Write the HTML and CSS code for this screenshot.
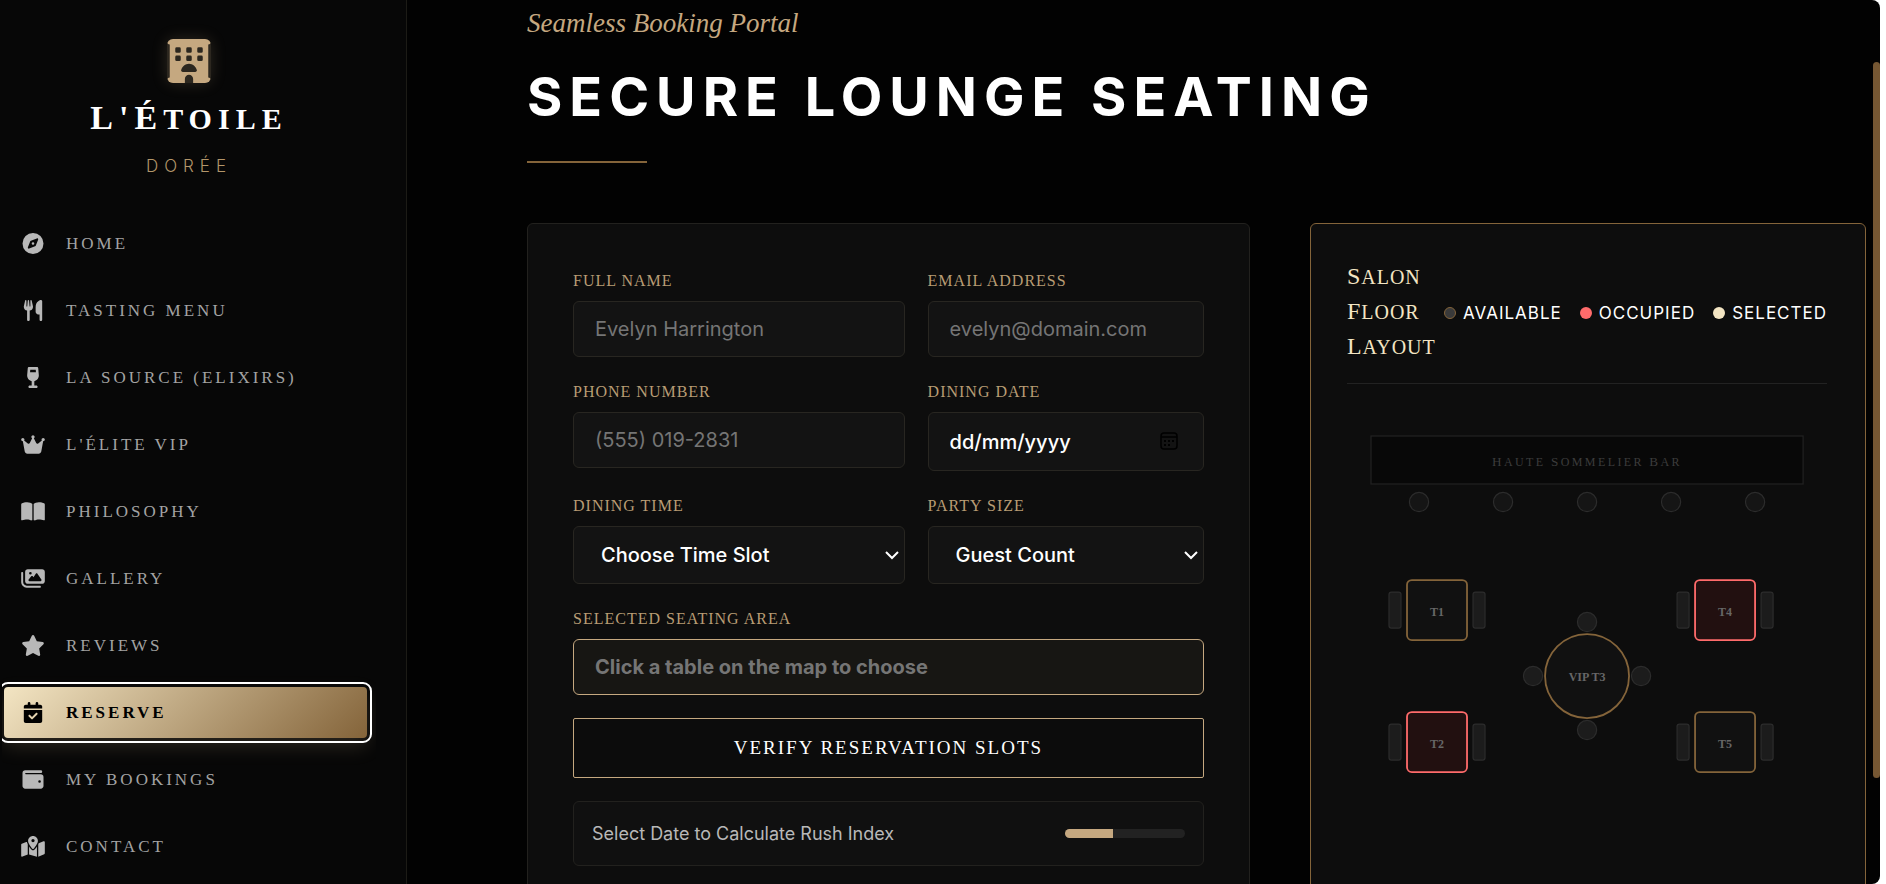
FILE: index.html
```html
<!DOCTYPE html>
<html lang="en">
<head>
    <meta charset="UTF-8">
    <meta name="viewport" content="width=device-width, initial-scale=1.0">
    <title>L'Étoile Dorée - Reserve</title>
    <link rel="stylesheet" href="styles.css">
</head>
<body>
    <div class="app">
        <!-- Sidebar -->
        <aside class="sidebar">
            <div class="brand">
                <svg class="brand-icon" viewBox="0 0 512 512" aria-hidden="true">
                    <path fill-rule="evenodd" d="M32 0H480c17.700 0 32 14.300 32 32s-14.300 32-32 32V448c17.700 0 32 14.300 32 32s-14.300 32-32 32H304V464c0-26.500-21.500-48-48-48s-48 21.500-48 48v48H32c-17.700 0-32-14.300-32-32s14.300-32 32-32V64C14.300 64 0 49.700 0 32S14.300 0 32 0zM112 96h32q16 0 16 16v32q0 16-16 16h-32q-16 0-16-16v-32q0-16 16-16zM240 96h32q16 0 16 16v32q0 16-16 16h-32q-16 0-16-16v-32q0-16 16-16zM368 96h32q16 0 16 16v32q0 16-16 16h-32q-16 0-16-16v-32q0-16 16-16zM112 192h32q16 0 16 16v32q0 16-16 16h-32q-16 0-16-16v-32q0-16 16-16zM240 192h32q16 0 16 16v32q0 16-16 16h-32q-16 0-16-16v-32q0-16 16-16zM368 192h32q16 0 16 16v32q0 16-16 16h-32q-16 0-16-16v-32q0-16 16-16zM184 384c-13 0-23-9-19-22 12-42 48-74 91-74s79 32 91 74c4 13-6 22-19 22z"/>
                </svg>
                <div class="brand-name"><span>L'</span><span>Étoile</span></div>
                <div class="brand-sub">DORÉE</div>
            </div>
            <nav class="nav">
                <a href="#home" class="nav-link">
                    <svg viewBox="0 0 512 512" aria-hidden="true"><path d="M256 512A256 256 0 1 0 256 0a256 256 0 1 0 0 512zm50.700-186.900L162.400 380.600c-19.400 7.500-38.500-11.600-31-31l55.500-144.300c3.300-8.500 9.900-15.100 18.400-18.400l144.300-55.500c19.400-7.500 38.500 11.600 31 31L325.100 306.700c-3.200 8.500-9.900 15.100-18.400 18.400zM288 256a32 32 0 1 0 -64 0 32 32 0 1 0 64 0z"/></svg>
                    <span>HOME</span>
                </a>
                <a href="#menu" class="nav-link">
                    <svg viewBox="0 0 448 512" aria-hidden="true"><path d="M416 0C400 0 288 32 288 176V288c0 35.300 28.700 64 64 64h32V480c0 17.700 14.300 32 32 32s32-14.300 32-32V352 240 32c0-17.700-14.300-32-32-32zM64 16C64 7.800 57.900 1 49.700 .1S34.200 4.600 32.400 12.500L2.100 148.800C.7 155.100 0 161.500 0 167.900c0 45.900 35.100 83.600 80 87.700V480c0 17.700 14.300 32 32 32s32-14.300 32-32V255.600c44.900-4.100 80-41.800 80-87.700c0-6.400-.7-12.800-2.100-19.100L191.600 12.500c-1.800-8-9.300-13.300-17.400-12.400S160 7.800 160 16V150.200c0 5.400-4.400 9.800-9.800 9.800c-5.100 0-9.300-3.900-9.800-9L127.900 14.600C127.200 6.300 120.300 0 112 0s-15.200 6.300-15.900 14.600L83.700 151c-.5 5.100-4.700 9-9.800 9c-5.400 0-9.800-4.400-9.800-9.800V16z"/></svg>
                    <span>TASTING MENU</span>
                </a>
                <a href="#elixirs" class="nav-link">
                    <svg viewBox="0 0 320 512" aria-hidden="true"><path d="M32.100 29.300C33.500 12.800 47.400 0 64 0H256c16.600 0 30.500 12.800 31.900 29.300l14 168.400c6 72-42.500 135.200-109.900 150.600V448h48c17.700 0 32 14.300 32 32s-14.300 32-32 32H160 80c-17.700 0-32-14.300-32-32s14.300-32 32-32h48V348.400C60.600 333 12.100 269.800 18.100 197.800l14-168.400zm56 98.700H231.900l-5.300-64H93.400l-5.300 64z"/></svg>
                    <span>LA SOURCE (ELIXIRS)</span>
                </a>
                <a href="#vip" class="nav-link">
                    <svg viewBox="0 0 576 512" aria-hidden="true"><path d="M309 106c11.400-7 19-19.700 19-34c0-22.100-17.900-40-40-40s-40 17.900-40 40c0 14.400 7.600 27 19 34L209.700 220.600c-9.100 18.200-32.700 23.400-48.600 10.700L72 160c5-6.700 8-15 8-24c0-22.100-17.900-40-40-40S0 113.900 0 136s17.900 40 40 40c.2 0 .5 0 .7 0L86.400 427.400c5.500 30.400 32 52.600 63 52.600H426.600c30.900 0 57.400-22.100 63-52.600L535.300 176c.2 0 .5 0 .7 0c22.100 0 40-17.900 40-40s-17.900-40-40-40s-40 17.900-40 40c0 9 3 17.300 8 24l-89.100 71.300c-15.900 12.700-39.500 7.500-48.600-10.700L309 106z"/></svg>
                    <span>L'ÉLITE VIP</span>
                </a>
                <a href="#philosophy" class="nav-link">
                    <svg viewBox="0 0 576 512" aria-hidden="true"><path d="M249.600 471.500c10.800 3.800 22.400-4.100 22.400-15.500V78.600c0-4.200-1.600-8.400-5-11C247.400 52 202.400 32 144 32C93.500 32 46.300 45.300 18.100 56.100C6.800 60.500 0 71.700 0 83.800V454.100c0 11.900 12.800 20.200 24.100 16.500C55.600 460.100 105.500 448 144 448c33.900 0 79 14 105.600 23.500zm76.800 0C353 462 398.100 448 432 448c38.500 0 88.400 12.100 119.900 22.600c11.300 3.800 24.100-4.600 24.100-16.500V83.800c0-12.100-6.800-23.300-18.100-27.600C529.700 45.300 482.500 32 432 32c-58.400 0-103.400 20-123 35.600c-3.300 2.600-5 6.800-5 11V456c0 11.400 11.700 19.300 22.400 15.500z"/></svg>
                    <span>PHILOSOPHY</span>
                </a>
                <a href="#gallery" class="nav-link">
                    <svg viewBox="0 0 576 512" aria-hidden="true"><path d="M160 32c-35.300 0-64 28.700-64 64V320c0 35.300 28.700 64 64 64H512c35.300 0 64-28.700 64-64V96c0-35.300-28.700-64-64-64H160zM396 138.700l96 144c4.900 7.400 5.400 16.800 1.200 24.600S480.900 320 472 320H328 280 200c-9.200 0-17.600-5.300-21.600-13.600s-2.900-18.200 2.900-25.400l64-80c4.600-5.700 11.400-9 18.700-9s14.200 3.300 18.700 9l17.300 21.600 56-84C360.500 132 368 128 376 128s15.500 4 20 10.700zM192 128a32 32 0 1 1 64 0 32 32 0 1 1 -64 0zM48 120c0-13.300-10.700-24-24-24S0 106.700 0 120V344c0 75.100 60.900 136 136 136H456c13.300 0 24-10.700 24-24s-10.700-24-24-24H136c-48.600 0-88-39.400-88-88V120z"/></svg>
                    <span>GALLERY</span>
                </a>
                <a href="#reviews" class="nav-link">
                    <svg viewBox="0 0 576 512" aria-hidden="true"><path d="M316.900 18C311.600 7 300.400 0 288.100 0s-23.400 7-28.800 18L195 150.300 51.400 171.500c-12 1.800-22 10.200-25.700 21.700s-.7 24.200 7.900 32.700L137.800 329 113.200 474.700c-2 12 3 24.200 12.900 31.300s23 8 33.800 2.300l128.300-68.500 128.300 68.500c10.800 5.700 23.900 4.900 33.800-2.300s14.900-19.300 12.900-31.300L438.500 329 542.700 225.900c8.600-8.500 11.700-21.200 7.900-32.700s-13.700-19.900-25.700-21.700L381.200 150.300 316.900 18z"/></svg>
                    <span>REVIEWS</span>
                </a>
                <a href="#reserve" class="nav-link active">
                    <svg viewBox="0 0 448 512" aria-hidden="true"><path d="M128 0c17.700 0 32 14.300 32 32V64H288V32c0-17.700 14.300-32 32-32s32 14.300 32 32V64h48c26.500 0 48 21.500 48 48v48H0V112C0 85.500 21.500 64 48 64H96V32c0-17.700 14.300-32 32-32zM0 192H448V464c0 26.500-21.500 48-48 48H48c-26.500 0-48-21.500-48-48V192zM329 305c9.400-9.400 9.400-24.600 0-33.900s-24.600-9.400-33.900 0l-95 95-47-47c-9.400-9.400-24.600-9.400-33.900 0s-9.400 24.600 0 33.900l64 64c9.400 9.400 24.600 9.400 33.900 0L329 305z"/></svg>
                    <span>RESERVE</span>
                </a>
                <a href="#bookings" class="nav-link">
                    <svg viewBox="0 0 512 512" aria-hidden="true"><path d="M64 32C28.700 32 0 60.700 0 96V416c0 35.300 28.700 64 64 64H448c35.300 0 64-28.700 64-64V192c0-35.300-28.700-64-64-64H80c-8.800 0-16-7.200-16-16s7.200-16 16-16H448c17.700 0 32-14.300 32-32s-14.300-32-32-32H64zM416 272a32 32 0 1 1 0 64 32 32 0 1 1 0-64z"/></svg>
                    <span>MY BOOKINGS</span>
                </a>
                <a href="#contact" class="nav-link">
                    <svg viewBox="0 0 576 512" aria-hidden="true"><path d="M408 120c0 54.600-73.100 151.900-105.200 192c-7.700 9.600-22 9.600-29.600 0C241.100 271.900 168 174.600 168 120C168 53.700 221.700 0 288 0s120 53.700 120 120zm8 80.400c3.500-6.900 6.700-13.800 9.600-20.600c.5-1.200 1-2.500 1.500-3.700l116-46.400C558.900 123.400 576 135 576 152V422.800c0 9.800-6 18.600-15.100 22.300L416 503V200.400zM137.600 138.300c2.400 14.100 7.200 28.300 12.800 41.500c2.900 6.800 6.100 13.700 9.600 20.600V451.800L32.900 502.700C17.100 509 0 497.400 0 480.400V209.600c0-9.800 6-18.600 15.100-22.300l122.600-49zM327.800 332c13.900-17.400 35.700-45.700 56.200-77V504.300L192 449.400V255c20.500 31.300 42.300 59.600 56.200 77c20.500 25.600 59.100 25.600 79.600 0zM288 152a40 40 0 1 0 0-80 40 40 0 1 0 0 80z"/></svg>
                    <span>CONTACT</span>
                </a>
            </nav>
        </aside>

        <!-- Reservation page -->
        <main class="main">
            <header class="page-header">
                <p class="subtitle">Seamless Booking Portal</p>
                <h1>SECURE LOUNGE SEATING</h1>
            </header>

            <div class="booking-grid">
                <form class="panel booking-form">
                    <div class="field">
                        <label for="full-name">FULL NAME</label>
                        <input type="text" id="full-name" placeholder="Evelyn Harrington">
                    </div>
                    <div class="field">
                        <label for="email">EMAIL ADDRESS</label>
                        <input type="email" id="email" placeholder="evelyn@domain.com">
                    </div>
                    <div class="field">
                        <label for="phone">PHONE NUMBER</label>
                        <input type="tel" id="phone" placeholder="(555) 019-2831">
                    </div>
                    <div class="field date-field">
                        <label for="date">DINING DATE</label>
                        <div class="date-box">
                            <input type="text" id="date" placeholder="dd/mm/yyyy">
                            <svg viewBox="0 0 18 18" aria-hidden="true">
                                <rect x="1" y="1" width="16" height="16" rx="3" fill="none" stroke="#000" stroke-width="1.500"/>
                                <path d="M1 5h16" stroke="#000" stroke-width="1.500"/>
                                <path d="M4 8h2v2H4zM8 8h2v2H8zM12 8h2v2h-2zM4 12h2v2H4zM8 12h2v2H8z"/>
                            </svg>
                        </div>
                    </div>
                    <div class="field">
                        <label for="time">DINING TIME</label>
                        <select id="time">
                            <option>Choose Time Slot</option>
                            <option>6:00 PM</option>
                            <option>8:00 PM</option>
                        </select>
                    </div>
                    <div class="field">
                        <label for="party">PARTY SIZE</label>
                        <select id="party">
                            <option>Guest Count</option>
                            <option>2 Guests</option>
                            <option>4 Guests</option>
                        </select>
                    </div>
                    <div class="field wide">
                        <label for="seat">SELECTED SEATING AREA</label>
                        <input type="text" id="seat" class="seat-input" placeholder="Click a table on the map to choose" readonly>
                    </div>
                    <button type="button" class="verify-btn wide">VERIFY RESERVATION SLOTS</button>
                    <div class="rush wide">
                        <span>Select Date to Calculate Rush Index</span>
                        <div class="rush-track"><div class="rush-fill" style="width: 40%"></div></div>
                    </div>
                </form>

                <section class="panel map-panel">
                    <div class="map-header">
                        <h2><span>Salon</span> <span>Floor</span> <span>Layout</span></h2>
                        <ul class="legend">
                            <li><i class="dot available"></i>AVAILABLE</li>
                            <li><i class="dot occupied"></i>OCCUPIED</li>
                            <li><i class="dot selected"></i>SELECTED</li>
                        </ul>
                    </div>
                    <svg class="floor-map" viewBox="0 0 400 400">
                        <!-- Bar and stools -->
                        <rect class="bar" x="20" y="20" width="360" height="40"/>
                        <text class="bar-label" x="200" y="45"><tspan class="cap">H</tspan>AUTE <tspan class="cap">S</tspan>OMMELIER <tspan class="cap">B</tspan>AR</text>
                        <g class="stool">
                            <circle cx="60" cy="75" r="8"/>
                            <circle cx="130" cy="75" r="8"/>
                            <circle cx="200" cy="75" r="8"/>
                            <circle cx="270" cy="75" r="8"/>
                            <circle cx="340" cy="75" r="8"/>
                        </g>
                        <!-- Tables -->
                        <g class="table">
                            <rect class="chair" x="35" y="150" width="10" height="30" rx="2"/>
                            <rect class="chair" x="105" y="150" width="10" height="30" rx="2"/>
                            <rect class="top" x="50" y="140" width="50" height="50" rx="4"/>
                            <text x="75" y="170">T1</text>
                        </g>
                        <g class="table taken">
                            <rect class="chair" x="35" y="260" width="10" height="30" rx="2"/>
                            <rect class="chair" x="105" y="260" width="10" height="30" rx="2"/>
                            <rect class="top" x="50" y="250" width="50" height="50" rx="4"/>
                            <text x="75" y="280">T2</text>
                        </g>
                        <g class="table">
                            <circle class="chair" cx="200" cy="175" r="8"/>
                            <circle class="chair" cx="155" cy="220" r="8"/>
                            <circle class="chair" cx="245" cy="220" r="8"/>
                            <circle class="chair" cx="200" cy="265" r="8"/>
                            <circle class="top" cx="200" cy="220" r="35"/>
                            <text x="200" y="224">VIP T3</text>
                        </g>
                        <g class="table taken">
                            <rect class="chair" x="275" y="150" width="10" height="30" rx="2"/>
                            <rect class="chair" x="345" y="150" width="10" height="30" rx="2"/>
                            <rect class="top" x="290" y="140" width="50" height="50" rx="4"/>
                            <text x="315" y="170">T4</text>
                        </g>
                        <g class="table">
                            <rect class="chair" x="275" y="260" width="10" height="30" rx="2"/>
                            <rect class="chair" x="345" y="260" width="10" height="30" rx="2"/>
                            <rect class="top" x="290" y="250" width="50" height="50" rx="4"/>
                            <text x="315" y="280">T5</text>
                        </g>
                    </svg>
                </section>
            </div>
        </main>
        <div class="scroll-thumb"></div>
    </div>
</body>
</html>
```

FILE: styles.css
```css
* {
    margin: 0;
    padding: 0;
    box-sizing: border-box;
}

:root {
    --gold: #c5a880;
    --gold-dark: #84643a;
    --gold-light: #f3e5c3;
    --red: #ff6b6b;
    --line: #22211e;
    --serif: "Liberation Serif", serif;
    --sans: Inter, "Open Sans", sans-serif;
}

body {
    background: #fff;
    color: #fff;
    font-family: var(--sans);
    overflow: hidden;
}

.app {
    position: relative;
    display: flex;
    height: 100vh;
    margin-right: 6px;
    background: #020202;
    border-radius: 0 8px 8px 0;
    overflow: hidden;
}

/* Sidebar */
.sidebar {
    flex: 0 0 407px;
    padding: 39px 30px 0 2px;
    background: #070707;
    border-right: 1px solid #1c1b16;
    overflow: hidden;
}

.brand {
    display: flex;
    flex-direction: column;
    align-items: center;
    gap: 15px;
    margin-bottom: 40px;
}

.brand-icon {
    width: 44px;
    height: 44px;
    fill: var(--gold);
    background: rgba(197, 168, 128, 0.2);
    border-radius: 6px;
    box-shadow: 0 0 16px rgba(197, 168, 128, 0.2);
}

.brand-name {
    display: flex;
    font: bold 30px/40px var(--serif);
    letter-spacing: 6px;
    text-transform: uppercase;
}

.brand-name span::first-letter {
    font-size: 34px;
}

.brand-sub {
    font-size: 17px;
    font-weight: 300;
    line-height: 24px;
    letter-spacing: 6px;
    color: #b3966a;
}

.nav {
    display: flex;
    flex-direction: column;
    gap: 16px;
    padding: 0 9px 16px 2px;
    overflow: hidden;
}

.nav-link {
    display: flex;
    align-items: center;
    gap: 21px;
    height: 51px;
    flex-shrink: 0;
    padding: 0 17px;
    border-radius: 4px;
    font: 17px/24px var(--serif);
    letter-spacing: 3px;
    color: #a3a3a3;
    text-decoration: none;
}

.nav-link svg {
    width: 24px;
    height: 21px;
    fill: #b8b8b8;
}

.nav-link.active {
    background: linear-gradient(135deg, var(--gold-light), var(--gold-dark));
    color: #000;
    font-weight: bold;
    outline: 2px solid #fff;
    outline-offset: 3px;
    box-shadow: 0 8px 20px rgba(197, 168, 128, 0.2);
}

.nav-link.active svg {
    fill: #000;
}

/* Main area */
.main {
    flex: 1;
    min-width: 0;
    padding: 6px 14px 60px 120px;
}

.subtitle {
    font: italic 27px/34px var(--serif);
    color: var(--gold);
}

h1 {
    margin-top: 25px;
    font-size: 54px;
    font-weight: 700;
    line-height: 64px;
    letter-spacing: 7px;
}

.page-header {
    margin-bottom: 60px;
}

.page-header::after {
    content: "";
    display: block;
    width: 120px;
    height: 2px;
    margin-top: 32px;
    background: var(--gold-dark);
}

.booking-grid {
    display: grid;
    grid-template-columns: 13fr 10fr;
    gap: 60px;
}

.panel {
    min-width: 0;
    min-height: 720px;
    background: #0d0d0d;
    border: 1px solid var(--line);
    border-radius: 6px;
}

/* Form */
.booking-form {
    display: grid;
    grid-template-columns: 6fr 5fr;
    gap: 23px;
    align-content: start;
    padding: 45px;
}

.wide {
    grid-column: 1 / -1;
}

.field {
    display: flex;
    flex-direction: column;
    gap: 9px;
    min-width: 0;
}

.field label {
    font: 16px/23px var(--serif);
    letter-spacing: 1px;
    color: #b89c74;
}

.field input,
.field select {
    width: 100%;
    height: 56px;
    padding: 0 21px;
    background: #131313;
    border: 1px solid #282621;
    border-radius: 6px;
    font: 20px var(--sans);
    color: #fff;
}

.field input::placeholder {
    color: #757575;
    opacity: 1;
}

.field select {
    height: 58px;
    padding: 0 27px;
    appearance: none;
    background: #131313 url("data:image/svg+xml,%3Csvg xmlns='http://www.w3.org/2000/svg' width='14' height='9'%3E%3Cpath d='M1 1l6 6 6-6' fill='none' stroke='white' stroke-width='2'/%3E%3C/svg%3E") no-repeat right 5px center;
    font-weight: 500;
}

.date-box {
    position: relative;
}

.field .date-box input {
    display: block;
    height: 59px;
    font-weight: 500;
}

.field .date-box input::placeholder {
    color: #fff;
}

.date-box svg {
    position: absolute;
    right: 26px;
    top: 20px;
    width: 18px;
    height: 18px;
}

.field .seat-input {
    background: #171613;
    border-color: var(--gold);
    font-weight: 700;
}

.verify-btn {
    height: 60px;
    background: #0c0c0c;
    border: 1px solid var(--gold);
    border-radius: 2px;
    font: 19px var(--serif);
    letter-spacing: 2px;
    color: #fff;
    cursor: pointer;
}

.rush {
    display: flex;
    align-items: center;
    justify-content: space-between;
    height: 65px;
    padding: 0 18px;
    background: #101010;
    border: 1px solid var(--line);
    border-radius: 6px;
    font-size: 18px;
    color: #b8b8b8;
}

.rush-track {
    width: 120px;
    height: 9px;
    background: #222;
    border-radius: 5px;
    overflow: hidden;
}

.rush-fill {
    height: 100%;
    background: var(--gold);
}

/* Floor map */
.map-panel {
    padding: 36px;
    padding-right: 38px;
    border-color: var(--gold-dark);
}

.map-header {
    display: flex;
    align-items: center;
    justify-content: space-between;
    padding-bottom: 18px;
    margin-bottom: 28px;
    border-bottom: 1px solid #222;
}

.map-header h2 {
    font: 20px/35px var(--serif);
    letter-spacing: 1px;
    text-transform: uppercase;
    color: var(--gold-light);
}

.map-header h2 span {
    display: block;
}

.map-header h2 span::first-letter {
    font-size: 24px;
    line-height: 24px;
}

.legend {
    display: flex;
    gap: 18px;
    list-style: none;
    font-size: 17px;
    line-height: 24px;
    letter-spacing: 1px;
    white-space: nowrap;
}

.legend li {
    display: flex;
    align-items: center;
    gap: 7px;
}

.dot {
    width: 12px;
    height: 12px;
    border-radius: 50%;
}

.dot.available {
    background: #3a3a3a;
    border: 1px solid var(--gold-dark);
}

.dot.occupied {
    background: var(--red);
}

.dot.selected {
    background: var(--gold-light);
}

.floor-map {
    display: block;
    width: 100%;
    font-family: var(--serif);
    text-anchor: middle;
}

.bar {
    fill: #080808;
    stroke: #222;
}

.bar-label {
    font-size: 10px;
    letter-spacing: 2px;
    fill: #3c3c3c;
}

.bar-label .cap {
    font-size: 11px;
}

.stool {
    fill: #151515;
    stroke: #2c2c2c;
}

.chair {
    fill: #1c1c1c;
    stroke: #2c2c2c;
}

.table .top {
    fill: #111;
    stroke: var(--gold-dark);
    stroke-width: 1.5;
}

.table.taken .top {
    fill: #221010;
    stroke: var(--red);
}

.table text {
    font-size: 10px;
    font-weight: bold;
    fill: #666;
}

.scroll-thumb {
    position: absolute;
    right: 0;
    top: 7%;
    width: 7px;
    height: 81%;
    background: #765733;
    border-radius: 4px;
}
```
